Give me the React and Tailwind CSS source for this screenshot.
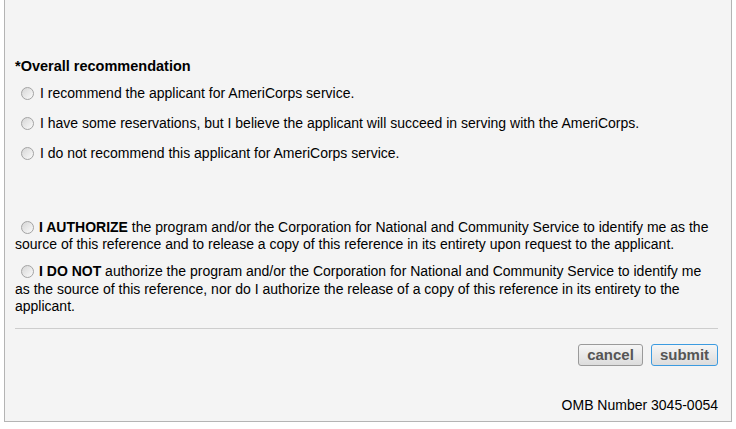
import React, { useState } from "react";

const options = [
  "I recommend the applicant for AmeriCorps service.",
  "I have some reservations, but I believe the applicant will succeed in serving with the AmeriCorps.",
  "I do not recommend this applicant for AmeriCorps service.",
];

function Radio({ checked, onClick, className = "" }) {
  return (
    <span
      onClick={onClick}
      className={`inline-flex shrink-0 items-center justify-center w-[13px] h-[13px] rounded-full border border-[#a3a3a3] bg-gradient-to-br from-[#d6d6d6] to-[#fbfbfb] cursor-pointer ${className}`}
    >
      {checked && <span className="w-[5px] h-[5px] rounded-full bg-[#333]" />}
    </span>
  );
}

function App() {
  const [rec, setRec] = useState(null);
  const [auth, setAuth] = useState(null);

  return (
    <div className="min-h-screen bg-white font-['Liberation_Sans',Arial,sans-serif] text-[14px] leading-[17px] text-black">
      <div className="ml-[4px] w-[728px] h-[422px] bg-[#f4f4f4] border-l border-r border-b border-[#b4b4b4] pl-[10px] pr-[13px] pt-[58px]">
        <div className="font-bold text-[14.5px]">*Overall recommendation</div>

        <div className="mt-[10px] flex flex-col gap-[13px]">
          {options.map((opt, i) => (
            <div key={i} className="flex items-center pl-[6px]">
              <Radio checked={rec === i} onClick={() => setRec(i)} />
              <span className="ml-[6px]">{opt}</span>
            </div>
          ))}
        </div>

        <p className="mt-[57px]">
          <Radio className="align-[-2px] ml-[6px] mr-[5px]" checked={auth === "yes"} onClick={() => setAuth("yes")} />
          <b>I AUTHORIZE</b> the program and/or the Corporation for National and Community Service to identify me as the
          source of this reference and to release a copy of this reference in its entirety upon request to the applicant.
        </p>

        <p className="mt-[10px] leading-[17.5px]">
          <Radio className="align-[-2px] ml-[6px] mr-[5px]" checked={auth === "no"} onClick={() => setAuth("no")} />
          <b>I DO NOT</b> authorize the program and/or the Corporation for National and Community Service to identify me
          as the source of this reference, nor do I authorize the release of a copy of this reference in its entirety to the
          applicant.
        </p>

        <div className="mt-[12px] h-px bg-[#cdcdcd]" />

        <div className="mt-[15px] flex justify-end gap-[8px]">
          <button className="w-[65px] h-[22px] rounded-[3px] border border-[#9a9a9a] bg-gradient-to-b from-[#f6f6f6] to-[#dcdcdc] font-bold text-[#555] text-[15px] leading-none">
            cancel
          </button>
          <button className="w-[67px] h-[22px] rounded-[3px] border border-[#3c9be0] bg-gradient-to-b from-[#f6f6f6] to-[#dcdcdc] font-bold text-[#555] text-[15px] leading-none">
            submit
          </button>
        </div>

        <div className="mt-[31px] text-right">OMB Number 3045-0054</div>
      </div>
    </div>
  );
}

export default App;
